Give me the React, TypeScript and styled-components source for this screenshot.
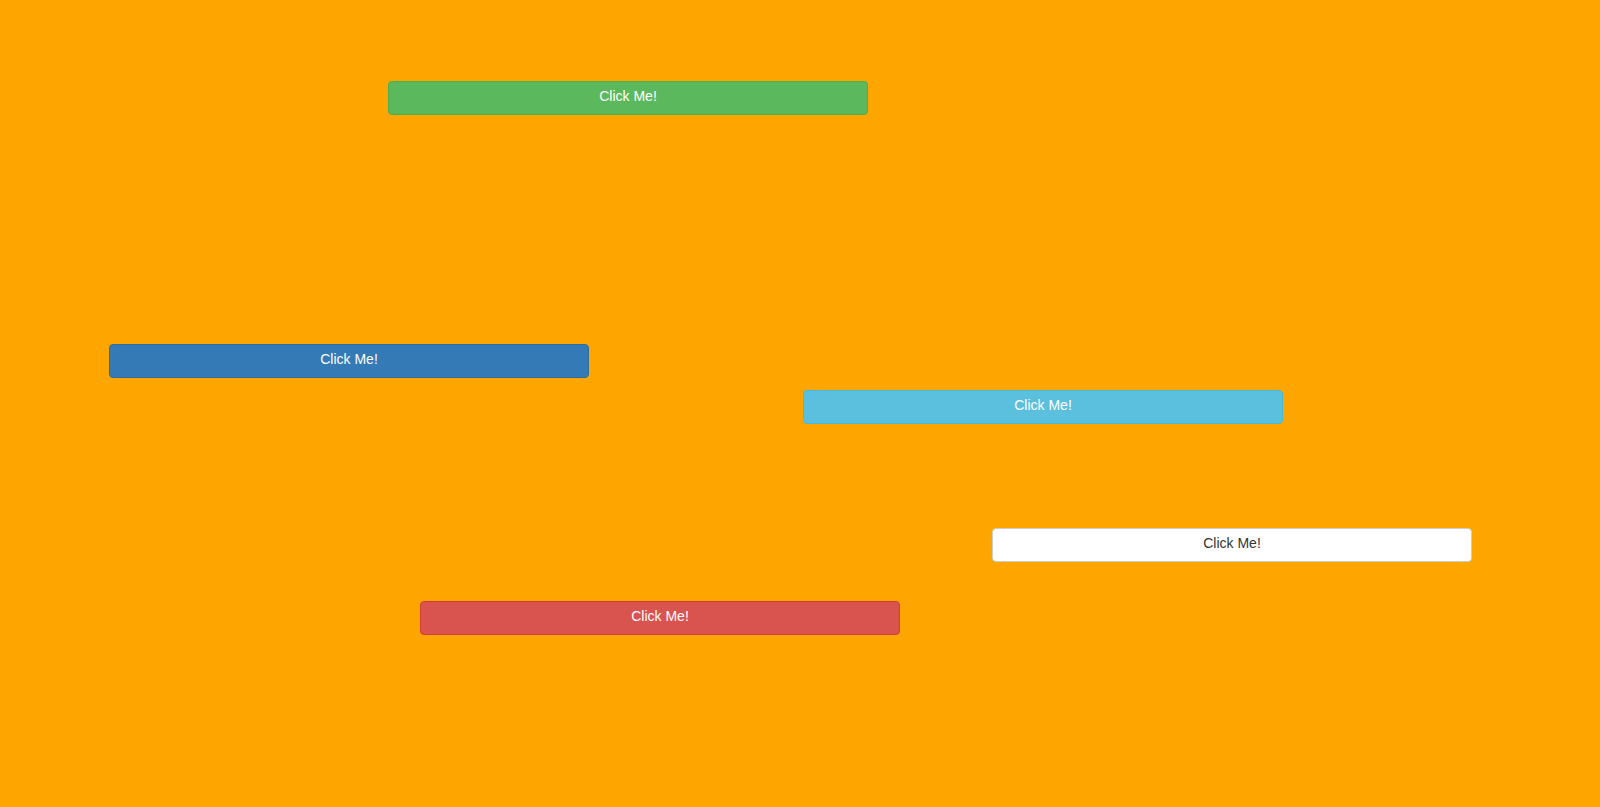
import React from "react";
import styled, { createGlobalStyle, css } from "styled-components";

const Global = createGlobalStyle`
  html, body { margin: 0; padding: 0; }
  body {
    background: #ffa500;
    font-family: "Liberation Sans", Arial, sans-serif;
    font-size: 14px;
    line-height: 1.42857143;
    color: #333;
  }
`;

const Canvas = styled.div`
  position: relative;
  width: 1600px;
  height: 807px;
  background: #ffa500;
  overflow: hidden;
`;

type Variant = "success" | "primary" | "info" | "default" | "danger";

const variants: Record<Variant, ReturnType<typeof css>> = {
  success: css`background: #5cb85c; border-color: #4cae4c; color: #fff;`,
  primary: css`background: #337ab7; border-color: #2e6da4; color: #fff;`,
  info: css`background: #5bc0de; border-color: #46b8da; color: #fff;`,
  default: css`background: #fff; border-color: #ccc; color: #333;`,
  danger: css`background: #d9534f; border-color: #d43f3a; color: #fff;`,
};

const FloatingButton = styled.button<{ $variant: Variant; $x: number; $y: number }>`
  position: absolute;
  left: ${(p) => p.$x}px;
  top: ${(p) => p.$y}px;
  box-sizing: border-box;
  display: block;
  width: 480px;
  height: 34px;
  padding: 4px 12px 8px;
  border: 1px solid transparent;
  border-radius: 4px;
  font-family: "Liberation Sans", Arial, sans-serif;
  font-size: 14px;
  line-height: 20px;
  text-align: center;
  cursor: pointer;
  ${(p) => variants[p.$variant]}
`;

const Label = styled.span`
  display: block;
  line-height: 20px;
`;

const buttons: { v: Variant; x: number; y: number }[] = [
  { v: "success", x: 388, y: 81 },
  { v: "primary", x: 109, y: 344 },
  { v: "info", x: 803, y: 390 },
  { v: "default", x: 992, y: 528 },
  { v: "danger", x: 420, y: 601 },
];

export default function App() {
  return (
    <>
      <Global />
      <Canvas>
        {buttons.map((b) => (
          <FloatingButton key={b.v} $variant={b.v} $x={b.x} $y={b.y}>
            <Label>Click Me!</Label>
          </FloatingButton>
        ))}
      </Canvas>
    </>
  );
}
